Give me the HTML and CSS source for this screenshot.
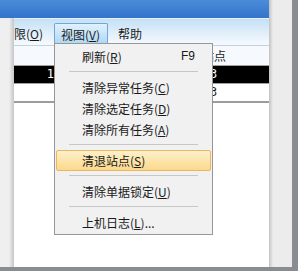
FILE: index.html
```html
<!DOCTYPE html>
<html lang="zh-CN">
<head>
    <meta charset="UTF-8">
    <meta name="viewport" content="width=device-width, initial-scale=1.0">
    <title>视图菜单</title>
    <link rel="stylesheet" href="styles.css">
</head>
<body>
    <div class="screen">
        <div class="stage">
            <div class="window">
                <div class="titlebar"></div>
                <div class="win-body">
                    <div class="left-edge"></div>
                    <div class="client">
                        <nav class="menubar">
                            <span class="mb-item">限(<u>O</u>)</span>
                            <span class="mb-item active">视图(<u>V</u>)</span>
                            <span class="mb-item">帮助</span>
                        </nav>
                        <div class="grid">
                            <div class="grid-row head">
                                <span class="cell"></span>
                                <span class="cell"></span>
                                <span class="cell">站点</span>
                            </div>
                            <div class="grid-row selected">
                                <span class="cell num">1</span>
                                <span class="cell"></span>
                                <span class="cell">3</span>
                            </div>
                            <div class="grid-row last">
                                <span class="cell num"></span>
                                <span class="cell"></span>
                                <span class="cell">3</span>
                            </div>
                        </div>

                        <!-- dropdown of the 视图 menu -->
                        <ul class="dropdown">
                            <li class="menu-item"><span>刷新(<u>R</u>)</span><span class="key">F9</span></li>
                            <li class="sep"></li>
                            <li class="menu-item"><span>清除异常任务(<u>C</u>)</span></li>
                            <li class="menu-item"><span>清除选定任务(<u>D</u>)</span></li>
                            <li class="menu-item"><span>清除所有任务(<u>A</u>)</span></li>
                            <li class="sep"></li>
                            <li class="menu-item hover"><span>清退站点(<u>S</u>)</span></li>
                            <li class="sep"></li>
                            <li class="menu-item"><span>清除单据锁定(<u>U</u>)</span></li>
                            <li class="sep"></li>
                            <li class="menu-item"><span>上机日志(<u>L</u>)...</span></li>
                        </ul>
                    </div>
                </div>
            </div>
            <div class="side"></div>
            <div class="edge"></div>
        </div>
        <div class="bottom"></div>
    </div>
</body>
</html>
```

FILE: styles.css
```css
body {
    margin: 0;
    padding: 0;
    font-family: "Noto Sans CJK SC", "Noto Sans", sans-serif;
    font-size: 12px;
    color: #1b1b1b;
    background-color: #ececec;
}

.screen {
    width: 298px;
    height: 271px;
    display: flex;
    flex-direction: column;
    overflow: hidden;
}

.stage {
    height: 267px;
    display: flex;
}

.window {
    width: 269px;
    display: flex;
    flex-direction: column;
    background-color: #fff;
}

.titlebar {
    height: 18px;
    background: linear-gradient(#4b8cd8, #3473cb);
}

.win-body {
    flex: 1;
    display: flex;
}

.left-edge {
    width: 14px;
    background: linear-gradient(90deg, #efefef 0, #efefef 9px, #c6c6c6 14px);
}

.client {
    flex: 1;
    position: relative;
    background-color: #fff;
}

.menubar {
    height: 26px;
    display: flex;
    align-items: flex-end;
    border-top: 1px solid #e6f1fb;
    border-bottom: 1px solid #c3d2e1;
    background: linear-gradient(#c4e0f6, #e4f0fa 60%, #f6fafe);
}

.mb-item {
    height: 22px;
    line-height: 22px;
    padding: 0 5px;
}

.mb-item:first-child {
    padding: 0;
    width: 40px;
}

.mb-item.active {
    width: 54px;
    box-sizing: border-box;
    padding: 0 0 0 6px;
    border: 1px solid #6ea7dc;
    border-bottom: none;
    border-radius: 2px 2px 0 0;
    background: linear-gradient(#e2f1fc, #a9d6f4);
}

.mb-item:last-child {
    padding-left: 10px;
}

u {
    text-decoration: underline;
    text-underline-offset: 1px;
}

.grid {
    display: flex;
    flex-direction: column;
}

.grid-row {
    display: grid;
    grid-template-columns: 40px 148px 1fr;
    height: 17px;
    line-height: 17px;
    border-bottom: 1px solid #a0a0a0;
    font-family: "DejaVu Sans Mono", monospace;
}

.grid-row.head {
    height: 19px;
    line-height: 19px;
    background-color: #f6f9fd;
    font-family: "Noto Sans CJK SC", sans-serif;
}

.grid-row.head .cell {
    padding-left: 0;
}

.grid-row.selected {
    background-color: #000;
    color: #fff;
}

.grid-row.last {
    border-bottom: 2px solid #9c9c9c;
}

.cell {
    overflow: hidden;
    white-space: nowrap;
    padding-left: 8px;
}

.cell.num {
    text-align: right;
    padding: 0;
}

.dropdown {
    position: absolute;
    left: 40px;
    top: 25px;
    width: 159px;
    box-sizing: border-box;
    margin: 0;
    padding: 2px 0 1px;
    list-style: none;
    background-color: #f1f1f1;
    border: 1px solid #979797;
}

.menu-item {
    height: 21px;
    line-height: 21px;
    margin: 0 1px;
    padding: 0 16px 0 26px;
    display: flex;
    justify-content: space-between;
    box-sizing: border-box;
    color: #1a1a1a;
}

.menu-item.hover {
    border: 1px solid #eeb55f;
    border-radius: 2px;
    line-height: 19px;
    padding-left: 25px;
    background: linear-gradient(#fdf0cb, #fbd98c);
}

.key {
    font-family: "Liberation Sans", sans-serif;
}

.sep {
    height: 10px;
    margin: 0 14px;
    background: linear-gradient(transparent 4px, #c7c7c7 4px, #c7c7c7 5px, transparent 5px);
}

.side {
    width: 23px;
    background: linear-gradient(90deg, #c2c2c2 0, #ececec 4px);
}

.edge {
    width: 6px;
    background-color: #898c90;
}

.bottom {
    height: 4px;
    background-color: #898c90;
}
```
